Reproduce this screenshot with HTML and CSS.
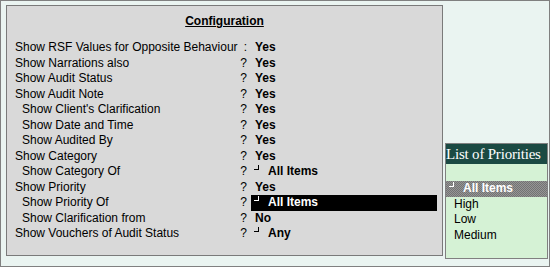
FILE: index.html
```html
<!DOCTYPE html>
<html lang="en">
<head>
<meta charset="UTF-8" />
<title>Configuration</title>
<link rel="stylesheet" href="styles.css">
</head>
<body>
<div class="screen">
  <div class="config">
    <div class="title">Configuration</div>
    <div class="rows">
      <div class="label">Show RSF Values for Opposite Behaviour</div><div class="sep">:</div><div class="value">Yes</div>
      <div class="label">Show Narrations also</div><div class="sep">?</div><div class="value">Yes</div>
      <div class="label">Show Audit Status</div><div class="sep">?</div><div class="value">Yes</div>
      <div class="label">Show Audit Note</div><div class="sep">?</div><div class="value">Yes</div>
      <div class="label sub">Show Client's Clarification</div><div class="sep">?</div><div class="value">Yes</div>
      <div class="label sub">Show Date and Time</div><div class="sep">?</div><div class="value">Yes</div>
      <div class="label sub">Show Audited By</div><div class="sep">?</div><div class="value">Yes</div>
      <div class="label">Show Category</div><div class="sep">?</div><div class="value">Yes</div>
      <div class="label sub">Show Category Of</div><div class="sep">?</div><div class="value"><span class="corner"></span>All Items</div>
      <div class="label">Show Priority</div><div class="sep">?</div><div class="value">Yes</div>
      <div class="label sub">Show Priority Of</div><div class="sep">?</div><div class="value active"><span class="corner"></span>All Items</div>
      <div class="label sub">Show Clarification from</div><div class="sep">?</div><div class="value">No</div>
      <div class="label">Show Vouchers of Audit Status</div><div class="sep">?</div><div class="value"><span class="corner"></span>Any</div>
    </div>
  </div>
  <div class="priorities">
    <div class="pri-head">List of Priorities</div>
    <ul class="pri-list">
      <li class="current"><span class="corner"></span>All Items</li>
      <li>High</li>
      <li>Low</li>
      <li>Medium</li>
    </ul>
  </div>
</div>
</body>
</html>
```

FILE: styles.css
```css
body {
  margin: 0;
  font-family: 'Liberation Sans', Arial, sans-serif;
  font-size: 12px;
  color: #000;
}
.screen {
  width: 548px;
  height: 265px;
  border: 1px solid #808080;
  background: #eaf4f1;
  display: flex;
  align-items: flex-start;
}
.config {
  margin: 4px 0 0 5px;
  width: 435px;
  height: 249px;
  border: 1px solid #7a7a7a;
  background: #d9d9d9;
}
.title {
  margin: 7px auto 0;
  width: max-content;
  font-weight: bold;
  text-decoration: underline;
  line-height: 16px;
}
.rows {
  display: grid;
  grid-template-columns: 224px 12px 186px;
  grid-auto-rows: 15.5px;
  line-height: 15.5px;
  margin-top: 11px;
  padding-left: 8px;
}
.label.sub {
  padding-left: 7px;
}
.sep {
  text-align: right;
  padding-right: 4px;
}
.value {
  padding-left: 4px;
  font-weight: bold;
}
.value.active {
  background: #000;
  color: #fff;
}
.corner {
  display: inline-block;
  width: 4px;
  height: 4px;
  margin: 0 9px 0 -1px;
  border-right: 1px solid currentColor;
  border-bottom: 1px solid currentColor;
  vertical-align: 5px;
}
.priorities {
  margin: 142px 0 0 2px;
  width: 101px;
  height: 114px;
  border: 1px solid #808080;
  background: #d5f2d5;
}
.pri-head {
  background: #1b4a43;
  color: #fff;
  font-family: 'Liberation Serif', 'Times New Roman', serif;
  font-size: 15px;
  line-height: 20px;
  letter-spacing: -0.2px;
  white-space: nowrap;
  overflow: hidden;
}
.pri-list {
  list-style: none;
  margin: 17px 0 0;
  padding: 0;
  line-height: 15.5px;
}
.pri-list li {
  padding-left: 8px;
}
.pri-list li.current {
  padding-left: 4px;
  font-weight: bold;
  color: #fff;
  background-color: #808080;
  background-image: repeating-conic-gradient(#737373 0 25%, #959595 0 50%);
  background-size: 2px 2px;
}
```
